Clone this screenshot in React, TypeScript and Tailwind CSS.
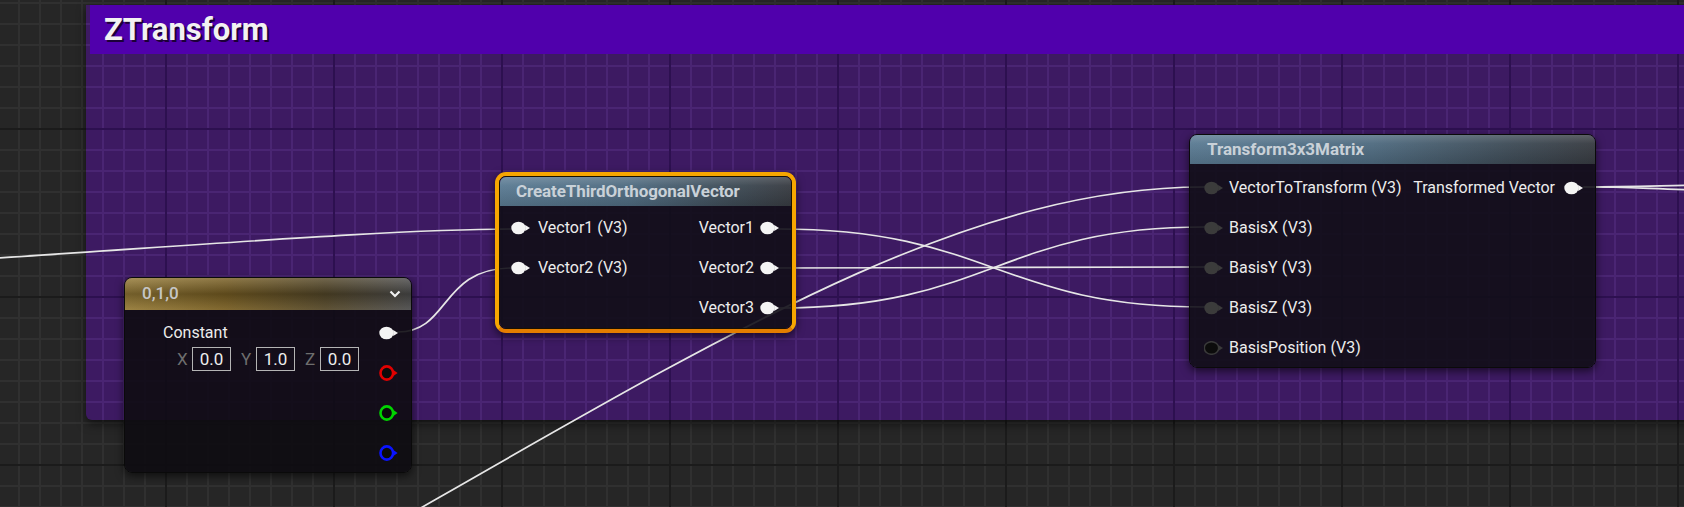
import React from 'react';

type PinKind = 'white' | 'gray' | 'empty' | 'red' | 'green' | 'blue';

function Pin({ kind }: { kind: PinKind }) {
  if (kind === 'red' || kind === 'green' || kind === 'blue') {
    const c = kind === 'red' ? '#e00000' : kind === 'green' ? '#00d400' : '#0a14ff';
    return (
      <svg width="20" height="16" viewBox="0 0 20 16" className="shrink-0">
        <ellipse cx="7.8" cy="8" rx="6.3" ry="6.6" fill="#0b0b0b" stroke={c} strokeWidth="2.6" />
        <path d="M14.4 5 L18.6 8 L14.4 11 Z" fill={c} />
      </svg>
    );
  }
  const fill = kind === 'white' ? '#f4f4f4' : kind === 'gray' ? '#3b3b3b' : '#0c0c0c';
  const stroke = kind === 'empty' ? '#3a3a3a' : 'none';
  return (
    <svg width="20" height="14" viewBox="0 0 20 14" className="shrink-0">
      <ellipse cx="7.5" cy="7" rx="7.2" ry="6.3" fill={fill} stroke={stroke} strokeWidth="1.5" />
      <path d="M14.2 4 L19 7 L14.2 10 Z" fill={kind === 'empty' ? '#3a3a3a' : fill} />
    </svg>
  );
}

function Field({ label, value }: { label: string; value: string }) {
  return (
    <div className="flex items-center gap-[4px]">
      <span className="w-[11px] text-[17px] text-[#6e6e6e] leading-none">{label}</span>
      <div className="w-[39px] h-[24px] border-[1.5px] border-[#b4b4b4] flex items-center justify-center text-[17px] text-[#ededed] leading-none">
        {value}
      </div>
    </div>
  );
}

const blueHeader =
  'bg-[linear-gradient(180deg,rgba(255,255,255,0.18)_0%,rgba(255,255,255,0.04)_30%,rgba(0,0,0,0.12)_100%),linear-gradient(90deg,#5b7b93_0%,#4f6b80_45%,#3e4b56_80%,#383c42_100%)]';

export default function App() {
  return (
    <div
      className="relative w-[1684px] h-[507px] overflow-hidden bg-[#262626] [background-image:linear-gradient(90deg,#1b1b1b_2px,transparent_2px),linear-gradient(180deg,#1b1b1b_2px,transparent_2px),linear-gradient(90deg,#303030_2px,transparent_2px),linear-gradient(180deg,#303030_2px,transparent_2px)] [background-size:168px_168px,168px_168px,21px_21px,21px_21px] [background-position:165px_0px,0px_128px,18px_0px,0px_2px]"
      style={{ fontFamily: 'Roboto, "Noto Sans", sans-serif' }}
    >
      {/* Comment box */}
      <div className="absolute left-[86px] top-[5px] w-[1700px] h-[415px] pl-[4px] rounded-bl-[6px] shadow-[0_4px_10px_rgba(0,0,0,0.55)] bg-[#3d1a62] [background-image:linear-gradient(90deg,#2d1050_2px,transparent_2px),linear-gradient(180deg,#2d1050_2px,transparent_2px),linear-gradient(90deg,#4a2573_2px,transparent_2px),linear-gradient(180deg,#4a2573_2px,transparent_2px)] [background-size:168px_168px,168px_168px,21px_21px,21px_21px] [background-position:79px_0px,0px_123px,16px_0px,0px_18px]">
        <div className="h-[49px] bg-[#5000ac] flex items-center pl-[14px]">
          <span className="text-[31px] font-bold text-[#f2f2f2] leading-none [text-shadow:2px_2px_0_#1c0038]">
            ZTransform
          </span>
        </div>
      </div>

      {/* Wires */}
      <svg className="absolute left-0 top-0" width="1684" height="507" viewBox="0 0 1684 507" fill="none">
        <g stroke="#e6e6e6" strokeWidth="1.7" strokeLinecap="round">
          <path d="M -2 258 C 200 245, 400 229, 512 229" />
          <path d="M 398 332 C 450 332, 440 268, 512 268" />
          <path d="M 779 229 C 990 229, 1000 307, 1204 307" />
          <path d="M 779 268 C 990 268, 990 267, 1204 267" />
          <path d="M 779 308 C 990 308, 1000 227, 1204 227" />
          <path d="M 300 577 C 700 350, 950 187, 1204 187" />
          <path d="M 1584 187 C 1630 187, 1650 186, 1700 185" />
          <path d="M 1584 187 C 1630 187, 1650 189, 1700 190" />
        </g>
      </svg>

      {/* Constant node */}
      <div className="absolute left-[124px] top-[277px] w-[288px] h-[196px] rounded-[8px] overflow-hidden flex flex-col shadow-[0_3px_8px_rgba(0,0,0,0.6)] border border-[#0a0a0a]">
        <div className="h-[32px] shrink-0 flex items-center justify-between pl-[17px] pr-[10px] bg-[linear-gradient(180deg,rgba(255,255,255,0.16)_0%,rgba(0,0,0,0.24)_50%,rgba(255,255,255,0.06)_100%),linear-gradient(90deg,#977c38_0%,#7a6024_35%,#56492a_70%,#4e4e4e_100%)]">
          <span className="text-[17px] font-medium text-[#c6c6c6]">0,1,0</span>
          <svg width="12" height="8" viewBox="0 0 12 8">
            <path d="M1.5 1.5 L6 6 L10.5 1.5" stroke="#f0f0f0" strokeWidth="2.2" fill="none" />
          </svg>
        </div>
        <div className="flex-1 bg-[#0e0c12]/90 flex justify-between">
          <div className="pl-[38px] pt-[13px] flex flex-col">
            <div className="text-[16px] leading-[20px] text-[#ececec]">Constant</div>
            <div className="mt-[4px] ml-[14px] h-[24px] flex items-center gap-[10px]">
              <Field label="X" value="0.0" />
              <Field label="Y" value="1.0" />
              <Field label="Z" value="0.0" />
            </div>
          </div>
          <div className="pr-[12px] pt-[3px] flex flex-col">
            <div className="h-[40px] flex items-center"><Pin kind="white" /></div>
            <div className="h-[40px] flex items-center"><Pin kind="red" /></div>
            <div className="h-[40px] flex items-center"><Pin kind="green" /></div>
            <div className="h-[40px] flex items-center"><Pin kind="blue" /></div>
          </div>
        </div>
      </div>

      {/* CreateThirdOrthogonalVector node (selected) */}
      <div className="absolute left-[495px] top-[172px] w-[301px] h-[161px] rounded-[11px] border-[4px] border-[#f7a600] border-b-[#e57e00] shadow-[0_3px_8px_rgba(0,0,0,0.6)]">
        <div className="w-full h-full rounded-[7px] overflow-hidden flex flex-col border border-[#1a1200]">
          <div className={`h-[29px] shrink-0 flex items-center pl-[16px] ${blueHeader}`}>
            <span className="text-[17px] font-bold text-[#c9d1d8] tracking-[-0.1px]">CreateThirdOrthogonalVector</span>
          </div>
          <div className="flex-1 bg-[#110e17]/90 pt-[2px] flex flex-col text-[16px] text-[#ececec]">
            <div className="h-[40px] flex items-center justify-between pl-[11px] pr-[11px]">
              <div className="flex items-center gap-[7px]"><Pin kind="white" /><span>Vector1 (V3)</span></div>
              <div className="flex items-center gap-[6px]"><span>Vector1</span><Pin kind="white" /></div>
            </div>
            <div className="h-[40px] flex items-center justify-between pl-[11px] pr-[11px]">
              <div className="flex items-center gap-[7px]"><Pin kind="white" /><span>Vector2 (V3)</span></div>
              <div className="flex items-center gap-[6px]"><span>Vector2</span><Pin kind="white" /></div>
            </div>
            <div className="h-[40px] flex items-center justify-end pl-[11px] pr-[11px]">
              <div className="flex items-center gap-[6px]"><span>Vector3</span><Pin kind="white" /></div>
            </div>
          </div>
        </div>
      </div>

      {/* Transform3x3Matrix node */}
      <div className="absolute left-[1189px] top-[134px] w-[407px] h-[234px] rounded-[8px] overflow-hidden flex flex-col shadow-[0_3px_8px_rgba(0,0,0,0.6)] border border-[#0a0a0a]">
        <div className={`h-[29px] shrink-0 flex items-center pl-[17px] ${blueHeader}`}>
          <span className="text-[17px] font-bold text-[#c9d1d8]">Transform3x3Matrix</span>
        </div>
        <div className="flex-1 bg-[#110e17]/90 pt-[4px] flex flex-col text-[16px] text-[#ececec]">
          <div className="h-[40px] flex items-center justify-between pl-[14px] pr-[11px]">
            <div className="flex items-center gap-[5px]"><Pin kind="gray" /><span>VectorToTransform (V3)</span></div>
            <div className="flex items-center gap-[9px]"><span>Transformed Vector</span><Pin kind="white" /></div>
          </div>
          <div className="h-[40px] flex items-center pl-[14px]">
            <div className="flex items-center gap-[5px]"><Pin kind="gray" /><span>BasisX (V3)</span></div>
          </div>
          <div className="h-[40px] flex items-center pl-[14px]">
            <div className="flex items-center gap-[5px]"><Pin kind="gray" /><span>BasisY (V3)</span></div>
          </div>
          <div className="h-[40px] flex items-center pl-[14px]">
            <div className="flex items-center gap-[5px]"><Pin kind="gray" /><span>BasisZ (V3)</span></div>
          </div>
          <div className="h-[40px] flex items-center pl-[14px]">
            <div className="flex items-center gap-[5px]"><Pin kind="empty" /><span>BasisPosition (V3)</span></div>
          </div>
        </div>
      </div>
    </div>
  );
}
